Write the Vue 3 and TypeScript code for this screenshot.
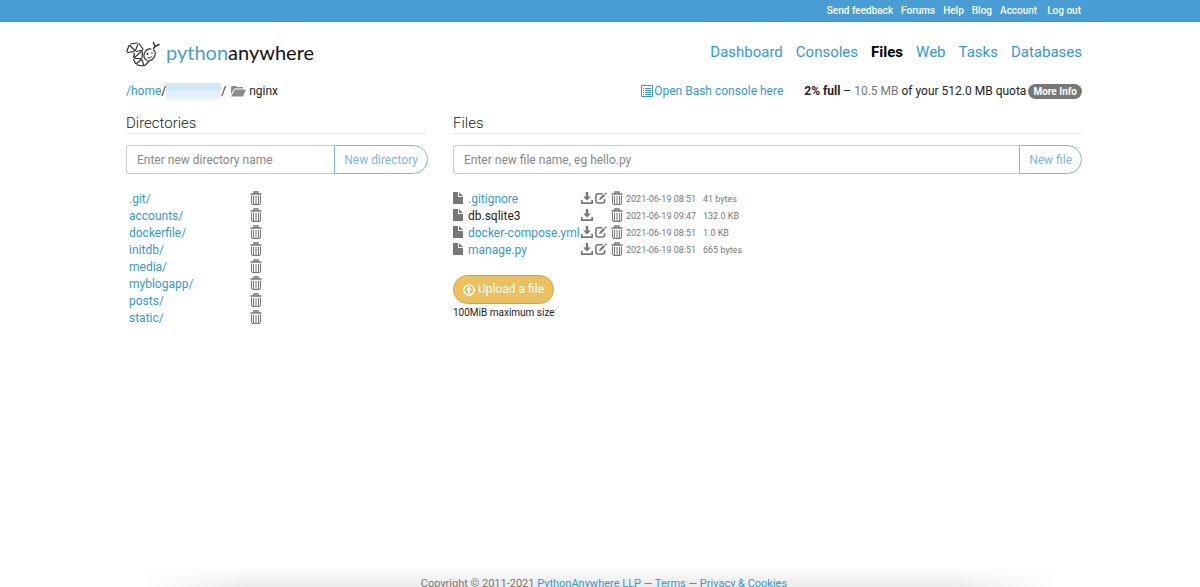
<script setup lang="ts">
interface FileEntry {
  name: string
  editable: boolean
  modified: string
  size: string
}

const accountLinks: string[] = ['Send feedback', 'Forums', 'Help', 'Blog', 'Account', 'Log out']
const tabs: string[] = ['Dashboard', 'Consoles', 'Files', 'Web', 'Tasks', 'Databases']
const activeTab = 'Files'
const directories: string[] = [
  '.git/', 'accounts/', 'dockerfile/', 'initdb/', 'media/', 'myblogapp/', 'posts/', 'static/',
]
const files: FileEntry[] = [
  { name: '.gitignore', editable: true, modified: '2021-06-19 08:51', size: '41 bytes' },
  { name: 'db.sqlite3', editable: false, modified: '2021-06-19 09:47', size: '132.0 KB' },
  { name: 'docker-compose.yml', editable: true, modified: '2021-06-19 08:51', size: '1.0 KB' },
  { name: 'manage.py', editable: true, modified: '2021-06-19 08:51', size: '665 bytes' },
]
</script>

<template>
  <div class="page">
    <svg class="symbols" aria-hidden="true">
      <symbol id="trash" viewBox="0 0 12 14">
        <path d="M4 2.500V1h4v1.500M.5 3h11" fill="none" stroke="currentColor" stroke-width="1.400" />
        <path d="M1.500 4.500V12q0 1.500 1.500 1.500h6q1.500 0 1.500-1.500V4.500M3.500 5v8M6 5v8M8.500 5v8" fill="none" stroke="currentColor" />
      </symbol>
      <symbol id="download" viewBox="0 0 12 12">
        <path d="M4.800 0h2.400v4.500h2.600L6 8.600 2.200 4.500h2.600z" fill="currentColor" />
        <path d="M.8 8v3.100h10.400V8" fill="none" stroke="currentColor" stroke-width="1.700" />
      </symbol>
      <symbol id="edit" viewBox="0 0 12 12">
        <path d="M7.500 1.800H3Q.9 1.800.9 3.800v5Q.9 11 3 11h4.600q2 0 2-2V7" fill="none" stroke="currentColor" stroke-width="1.600" />
        <path d="M4.200 8l.4-2 4.100-4.100 1.500 1.500L6.200 7.500zM9.400 1.200l1-1 1.500 1.500-1 1z" fill="currentColor" />
      </symbol>
      <symbol id="file" viewBox="0 0 10 12">
        <path d="M0 0h5v5h5v7H0zM6 0l4 4H6z" fill="currentColor" />
      </symbol>
    </svg>

    <nav class="topbar" aria-label="Account">
      <a v-for="link in accountLinks" :key="link" href="#">{{ link }}</a>
    </nav>

    <header class="header">
      <a class="brand" href="#" aria-label="PythonAnywhere">
        <svg class="mark" viewBox="0 0 34 26" aria-hidden="true">
          <g fill="none" stroke="#333" stroke-width="1.200" stroke-linecap="round">
            <path d="M.8 10.500L3 4.500M4.500 3L11 2M13 2.500l4 5.500M1.500 11.500l6.500-.8M3.800 4.500l5 5M11.800 3.500L9.500 9.500M10.500 10.500l6-1.500" />
            <path d="M8.500 12.500L7.500 16.500M8.500 16.500l7-6M7.500 18.500l2 4M9 17.500l6 .2M16.500 11l-.5 6M10.500 22.500l5-4M11 23.800l6 1.200M16.200 19l1.500 5.500M18.800 24.500l4-4" />
            <path d="M25 8q-4.500-.5-6.500 4t2 7M21.500 20q5 0 7-4.500t-1-6.500" />
            <path d="M27.500 7.500L29 5.500l4-2M29 5.500l-1.500-4" stroke-width="1.400" />
            <path d="M22 17q3 .5 4-1.500" stroke-width="1" />
          </g>
          <circle cx="21.500" cy="13" r=".9" fill="#222" />
          <circle cx="26" cy="12" r=".8" fill="#222" />
        </svg>
        <span class="wordmark">python<b>anywhere</b></span>
      </a>
      <nav class="tabs" aria-label="Main">
        <a v-for="tab in tabs" :key="tab" href="#" :class="{ active: tab === activeTab }">{{ tab }}</a>
      </nav>
    </header>

    <main class="main">
      <div class="location">
        <div class="path">
          <a href="#">/home</a><span>/</span><span class="user"></span><span>/</span>
          <svg class="folder" viewBox="0 0 15 12" aria-hidden="true">
            <path d="M0 9V2l1-1h4l1 1h6v1.500H3.500zM4 4.500h11L12 11.500H0z" fill="#8b8b8b" />
          </svg>
          <span>nginx</span>
        </div>
        <a class="console" href="#">
          <svg viewBox="0 0 12 12" aria-hidden="true">
            <path d="M.5.5h11v11H.5z" fill="none" stroke="currentColor" />
            <path d="M2 3.500h1M4 3.500h6M2 5.500h1M4 5.500h6M2 7.500h1M4 7.500h6M2 9.500h1M4 9.500h6" stroke="currentColor" />
          </svg>
          Open Bash console here
        </a>
        <div class="quota">
          <span><strong>2% full</strong> – <span class="used">10.5 MB</span> of your 512.0 MB quota</span>
          <button class="more" type="button">More Info</button>
        </div>
      </div>

      <div class="columns">
        <section>
          <h2>Directories</h2>
          <form class="create" @submit.prevent>
            <input type="text" aria-label="New directory name" placeholder="Enter new directory name">
            <button type="submit">New directory</button>
          </form>
          <table class="listing directories">
            <tbody>
              <tr v-for="directory in directories" :key="directory">
                <td class="dirname"><a href="#">{{ directory }}</a></td>
                <td>
                  <button type="button" :aria-label="`Delete ${directory}`"><svg class="trash"><use href="#trash" /></svg></button>
                </td>
              </tr>
            </tbody>
          </table>
        </section>

        <section>
          <h2>Files</h2>
          <form class="create" @submit.prevent>
            <input type="text" aria-label="New file name" placeholder="Enter new file name, eg hello.py">
            <button type="submit">New file</button>
          </form>
          <table class="listing">
            <tbody>
              <tr v-for="file in files" :key="file.name">
                <td class="kind"><svg class="file"><use href="#file" /></svg></td>
                <td class="filename">
                  <a v-if="file.editable" href="#">{{ file.name }}</a>
                  <span v-else>{{ file.name }}</span>
                </td>
                <td class="tool"><a href="#" :aria-label="`Download ${file.name}`"><svg class="action"><use href="#download" /></svg></a></td>
                <td class="tool edit"><a v-if="file.editable" href="#" :aria-label="`Edit ${file.name}`"><svg class="action"><use href="#edit" /></svg></a></td>
                <td class="tool"><button type="button" :aria-label="`Delete ${file.name}`"><svg class="trash"><use href="#trash" /></svg></button></td>
                <td class="modified">{{ file.modified }}</td>
                <td class="size">{{ file.size }}</td>
              </tr>
            </tbody>
          </table>
          <button class="upload" type="button">
            <svg viewBox="0 0 12 12" aria-hidden="true">
              <circle cx="6" cy="6" r="5.100" fill="none" stroke="currentColor" stroke-width="1.500" />
              <path d="M6 2.200L9 6H7v3.400H5V6H3z" fill="currentColor" />
            </svg>
            Upload a file
          </button>
          <p class="limit">100MiB maximum size</p>
        </section>
      </div>
    </main>

    <footer class="footer">
      <span>Copyright © 2011-2021 <a href="#">PythonAnywhere LLP</a> — <a href="#">Terms</a> — <a href="#">Privacy &amp; Cookies</a></span>
    </footer>
  </div>
</template>

<style>
body {
  margin: 0;
}
</style>

<style scoped>
.page {
  display: flex;
  flex-direction: column;
  height: 100vh;
  overflow: hidden;
  background: #fff;
  color: #222;
  font: 12px/17px Roboto, "Liberation Sans", sans-serif;
}
.page * {
  box-sizing: border-box;
}
a {
  color: #3498d4;
  text-decoration: none;
}
button,
input {
  font: inherit;
}
button {
  cursor: pointer;
}
svg {
  display: block;
  flex: none;
}
.symbols {
  position: absolute;
  width: 0;
  height: 0;
}
.topbar {
  display: flex;
  flex: none;
  justify-content: flex-end;
  gap: 8px;
  height: 22px;
  padding-right: 119px;
  border-bottom: 1px solid #4495ca;
  background: #479dd4;
  font-size: 10px;
  font-weight: 500;
  line-height: 21px;
}
.topbar a {
  color: #fff;
}
.topbar a:last-child {
  margin-left: 2px;
}
.header {
  display: flex;
  flex: none;
  justify-content: space-between;
  align-items: center;
  height: 60px;
  padding: 0 118px 0 126px;
}
.brand {
  display: flex;
  align-items: center;
  gap: 6px;
  padding-top: 3px;
}
.mark {
  width: 34px;
  height: 26px;
}
.wordmark {
  padding-bottom: 3px;
  color: #479dd4;
  font: 20px/24px Lato, "Liberation Sans", sans-serif;
}
.wordmark b {
  color: #111;
  font-weight: 400;
}
.tabs {
  display: flex;
  gap: 13px;
  font-size: 15px;
  line-height: 20px;
}
.tabs .active {
  color: #000;
  font-weight: 700;
}
.main {
  flex: 1;
  padding: 0 118px 0 126px;
}
.location {
  display: flex;
  align-items: center;
  height: 18px;
}
.path {
  display: flex;
  align-items: center;
  margin-right: auto;
}
.user {
  width: 55px;
  height: 16px;
  background: linear-gradient(#d3e8f6 50%, #e4f1fa 50%);
}
.folder {
  width: 15px;
  height: 12px;
  margin: 0 3px 0 5px;
}
.console {
  display: flex;
  align-items: center;
  gap: 1px;
  margin-right: 21px;
}
.console svg {
  width: 12px;
  height: 12px;
}
.quota {
  display: flex;
  align-items: center;
  gap: 2px;
}
.used {
  color: #777;
}
.more {
  height: 15px;
  padding: 0 5px;
  border: 0;
  border-radius: 8px;
  background: #777;
  color: #fff;
  font-size: 10px;
  font-weight: 700;
  line-height: 15px;
}
.columns {
  display: grid;
  grid-template-columns: 302fr 629fr;
  gap: 25px;
  margin-top: 12px;
}
h2 {
  height: 22px;
  margin: 0 0 11px;
  border-bottom: 1px solid #d4edfc;
  font-size: 15px;
  font-weight: 300;
  line-height: 22px;
}
.create {
  display: flex;
  height: 29px;
  margin-bottom: 17px;
}
.create input {
  flex: 1;
  min-width: 0;
  padding: 1px 10px 0;
  border: 1px solid #ccc;
  border-right: 0;
  border-radius: 3px 0 0 3px;
  background: #fff;
}
.create input::placeholder {
  color: #888;
  opacity: 1;
}
.create button {
  padding: 1px 9px 0;
  border: 1px solid #79b9e1;
  border-radius: 0 15px 15px 0;
  background: #fff;
  color: #79b9e1;
}
.listing {
  border-collapse: collapse;
}
.listing td {
  height: 17px;
  padding: 0;
}
.listing td svg {
  margin-bottom: 3px;
}
.listing button {
  display: block;
  padding: 0;
  border: 0;
  background: none;
  color: #777;
}
.directories {
  width: 100%;
}
.directories .dirname {
  width: 41%;
  padding-left: 3px;
}
.trash {
  width: 12px;
  height: 14px;
}
.file {
  width: 10px;
  height: 12px;
  color: #777;
}
.action {
  width: 12px;
  height: 12px;
  color: #777;
}
.kind {
  width: 15px;
}
.listing .filename {
  width: 113px;
}
.listing .tool {
  width: 14px;
}
.listing .edit {
  width: 16px;
}
.modified,
.size {
  color: #777;
  font-size: 9px;
}
.listing .modified {
  width: 78px;
  padding-left: 1px;
}
.upload {
  display: flex;
  align-items: center;
  gap: 3px;
  height: 29px;
  margin-top: 16px;
  padding: 0 9px;
  border: 1px solid #d3a43c;
  border-radius: 15px;
  background: #ebc160;
  color: #fff;
}
.upload svg {
  width: 12px;
  height: 12px;
}
.limit {
  margin: 1px 0 0;
  font-size: 10px;
  line-height: 15px;
}
.footer {
  flex: none;
  height: 20px;
  margin: 0 140px;
  padding: 8px 0 0 8px;
  background: linear-gradient(90deg, #fff, transparent 12%, transparent 88%, #fff), linear-gradient(#fff, #ebebeb);
  color: #777;
  font-size: 11px;
  line-height: 17px;
  text-align: center;
}
</style>
